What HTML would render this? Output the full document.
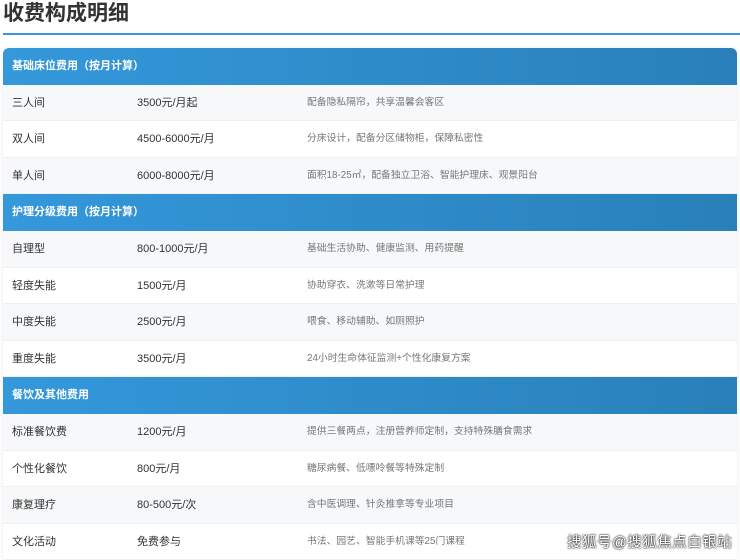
<!DOCTYPE html>
<html><head><meta charset="utf-8"><style>
body{margin:0;width:740px;height:556px;overflow:hidden;background:#fff;font-family:"Liberation Sans","Noto Sans CJK SC",sans-serif;}
h2{position:absolute;left:3px;top:0;margin:0;font-size:21px;line-height:28px;font-weight:bold;color:#333;}
.line{position:absolute;left:3px;right:0;top:33px;height:2px;background:#3498db;}
.tbl{position:absolute;left:3px;top:48px;width:734px;border-radius:6px 6px 0 0;overflow:hidden;box-shadow:0 0 6px rgba(0,0,0,.08);}
.h{height:36.6px;line-height:36.6px;background:linear-gradient(90deg,#3498db,#2980b9);color:#fff;font-weight:bold;font-size:11px;padding-left:9px;}
.r{height:36.6px;line-height:36.6px;position:relative;font-size:11px;color:#333;border-bottom:1px solid #eef0f2;box-sizing:border-box;}
.r.g{background:#f7f8fa;}
.r span{position:absolute;}
.a{left:9px}.b{left:134px}.c{left:304px;font-size:9.8px;color:#777;}
.wm{position:absolute;left:567px;top:531px;font-size:14.5px;color:#fff;text-shadow:0 0 2px #000,0 0 1px #000;letter-spacing:0.5px;}
</style></head><body>
<h2>收费构成明细</h2><div class="line"></div>
<div class="tbl">
<div class="h">基础床位费用（按月计算）</div>
<div class="r g"><span class="a">三人间</span><span class="b">3500元/月起</span><span class="c">配备隐私隔帘，共享温馨会客区</span></div>
<div class="r"><span class="a">双人间</span><span class="b">4500-6000元/月</span><span class="c">分床设计，配备分区储物柜，保障私密性</span></div>
<div class="r g"><span class="a">单人间</span><span class="b">6000-8000元/月</span><span class="c">面积18-25㎡，配备独立卫浴、智能护理床、观景阳台</span></div>
<div class="h">护理分级费用（按月计算）</div>
<div class="r g"><span class="a">自理型</span><span class="b">800-1000元/月</span><span class="c">基础生活协助、健康监测、用药提醒</span></div>
<div class="r"><span class="a">轻度失能</span><span class="b">1500元/月</span><span class="c">协助穿衣、洗漱等日常护理</span></div>
<div class="r g"><span class="a">中度失能</span><span class="b">2500元/月</span><span class="c">喂食、移动辅助、如厕照护</span></div>
<div class="r"><span class="a">重度失能</span><span class="b">3500元/月</span><span class="c">24小时生命体征监测+个性化康复方案</span></div>
<div class="h">餐饮及其他费用</div>
<div class="r g"><span class="a">标准餐饮费</span><span class="b">1200元/月</span><span class="c">提供三餐两点，注册营养师定制，支持特殊膳食需求</span></div>
<div class="r"><span class="a">个性化餐饮</span><span class="b">800元/月</span><span class="c">糖尿病餐、低嘌呤餐等特殊定制</span></div>
<div class="r g"><span class="a">康复理疗</span><span class="b">80-500元/次</span><span class="c">含中医调理、针灸推拿等专业项目</span></div>
<div class="r"><span class="a">文化活动</span><span class="b">免费参与</span><span class="c">书法、园艺、智能手机课等25门课程</span></div>
</div>
<div class="wm">搜狐号@搜狐焦点白银站</div>
</body></html>
